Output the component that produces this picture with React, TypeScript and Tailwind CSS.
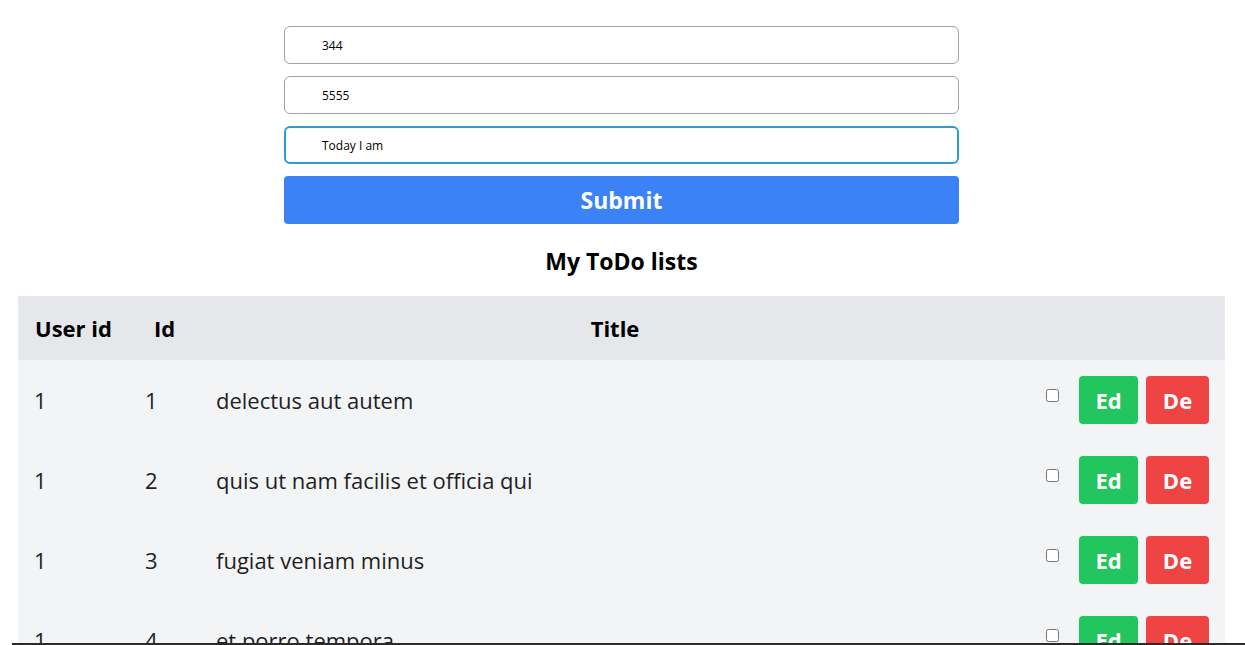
import { useState } from "react";

type Todo = { userId: number; id: number; title: string; completed: boolean };

const todos: Todo[] = [
  { userId: 1, id: 1, title: "delectus aut autem", completed: false },
  { userId: 1, id: 2, title: "quis ut nam facilis et officia qui", completed: false },
  { userId: 1, id: 3, title: "fugiat veniam minus", completed: false },
  { userId: 1, id: 4, title: "et porro tempora", completed: false },
];

export default function App() {
  const [userId, setUserId] = useState("344");
  const [id, setId] = useState("5555");
  const [title, setTitle] = useState("Today I am");

  return (
    <div className="min-h-screen w-[1243px] bg-white text-black" style={{ fontFamily: '"Open Sans", "Noto Sans", sans-serif' }}>
      {/* 表单 */}
      <form className="mx-auto flex w-[675px] flex-col gap-3 pt-[26px]" onSubmit={(e) => e.preventDefault()}>
        <input
          value={userId}
          onChange={(e) => setUserId(e.target.value)}
          className="h-[38px] rounded-md border border-[#9ca3af] pl-[37px] text-[12px] outline-none"
        />
        <input
          value={id}
          onChange={(e) => setId(e.target.value)}
          className="h-[38px] rounded-md border border-[#9ca3af] pl-[37px] text-[12px] outline-none"
        />
        <input
          value={title}
          onChange={(e) => setTitle(e.target.value)}
          className="h-[38px] rounded-md border-2 border-[#2d9bd0] pl-[36px] text-[12px] outline-none"
        />
        <button type="submit" className="h-12 rounded-sm bg-[#3b82f6] text-[23px] font-bold text-white">
          Submit
        </button>
      </form>

      <h2 className="mt-[22px] text-center text-[23px] font-bold leading-[30px]">My ToDo lists</h2>

      {/* 列表 */}
      <div className="mx-[18px] mt-5 w-[1207px]">
        <table className="w-full table-fixed border-collapse text-[22px]">
          <colgroup>
            <col className="w-[111px]" />
            <col className="w-[71px]" />
            <col />
            <col className="w-[195px]" />
          </colgroup>
          <thead className="bg-[#e5e7eb]">
            <tr>
              <th className="whitespace-nowrap px-4 py-4 text-center font-bold leading-8">User id</th>
              <th className="px-4 py-4 text-center font-bold leading-8">Id</th>
              <th className="px-4 py-4 text-center font-bold leading-8">Title</th>
              <th className="px-4 py-4" />
            </tr>
          </thead>
          <tbody className="bg-[#f3f4f6]">
            {todos.map((t) => (
              <tr key={t.id}>
                <td className="px-4 py-4 leading-8 text-[#1f1f1f]">{t.userId}</td>
                <td className="px-4 py-4 leading-8 text-[#1f1f1f]">{t.id}</td>
                <td className="px-4 py-4 leading-8 text-[#1f1f1f]">{t.title}</td>
                <td className="px-4 py-4">
                  <div className="flex items-start justify-end">
                    <input type="checkbox" defaultChecked={t.completed} className="mt-[13px] h-[13px] w-[13px]" />
                    <button type="button" className="ml-[20px] h-12 w-[59px] rounded-sm bg-[#22c55e] font-bold text-white">
                      Ed
                    </button>
                    <button type="button" className="ml-2 h-12 w-[63px] rounded-sm bg-[#ef4444] font-bold text-white">
                      De
                    </button>
                  </div>
                </td>
              </tr>
            ))}
          </tbody>
        </table>
      </div>

      <div className="fixed bottom-0 left-[12px] right-0 h-[2px] bg-[#2b2b2b]" />
    </div>
  );
}
